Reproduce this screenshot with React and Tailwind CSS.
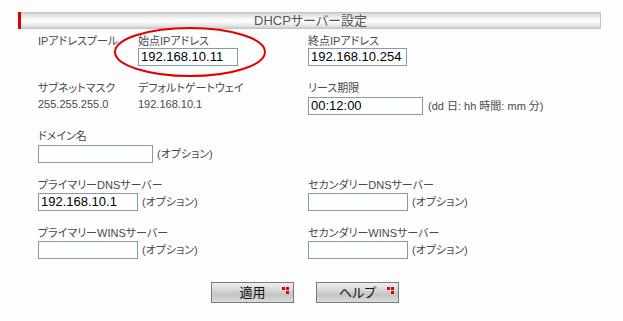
import React from "react";

const inputCls =
  "block h-[18px] border border-[#7f9db9] bg-white px-[2px] text-[13px] leading-[16px] text-black font-['Liberation_Sans',sans-serif]";

function Label({ children, className = "" }) {
  return <div className={"h-[14px] leading-[14px] whitespace-nowrap " + className}>{children}</div>;
}

function Dots() {
  return (
    <svg width="7" height="7" viewBox="0 0 7 7" className="absolute right-[4px] top-[4px]">
      <rect x="0" y="0" width="3" height="3" fill="#e00000" />
      <rect x="4" y="0" width="3" height="3" fill="#e00000" />
      <rect x="4" y="4" width="3" height="3" fill="#e00000" />
    </svg>
  );
}

function Btn({ children }) {
  return (
    <div className="relative w-[83px] h-[21px] border border-[#7a7a7a] bg-[linear-gradient(#efefef,#d9d9d9_35%,#c4c4c4_60%,#dcdcdc)] flex items-center justify-center text-[13px] text-[#111]">
      {children}
      <Dots />
    </div>
  );
}

function Opt() {
  return <span className="ml-[4px] whitespace-nowrap">(オプション)</span>;
}

export default function App() {
  return (
    <div className="relative w-[623px] h-[321px] overflow-hidden bg-[#fcfdfc] text-[11px] text-[#4a4a4a] [font-feature-settings:'palt'] font-['Liberation_Sans','Noto_Sans_CJK_JP',sans-serif]">
      {/* header */}
      <div className="pt-[12px] pl-[18px]">
        <div className="flex w-[583px] h-[17px]">
          <div className="w-[3px] bg-[#e00000]" />
          <div className="flex-1 border border-l-0 border-[#c4c4c4] bg-[linear-gradient(#d4d4d4,#f4f4f4_35%,#ffffff_55%,#e4e4e4_85%,#cfcfcf)] flex items-center justify-center text-[13px] text-[#555]">
            DHCPサーバー設定
          </div>
        </div>
      </div>

      {/* row 1 */}
      <div className="flex pl-[38px] pt-[5px]">
        <div className="w-[100px]">
          <Label>IPアドレスプール</Label>
        </div>
        <div className="w-[170px]">
          <Label>始点IPアドレス</Label>
          <div className={inputCls + " w-[100px]"}>192.168.10.11</div>
        </div>
        <div>
          <Label>終点IPアドレス</Label>
          <div className={inputCls + " w-[99px]"}>192.168.10.254</div>
        </div>
      </div>

      {/* row 2 */}
      <div className="flex pl-[38px] pt-[15px]">
        <div className="w-[100px]">
          <Label>サブネットマスク</Label>
          <Label className="mt-[2px]">255.255.255.0</Label>
        </div>
        <div className="w-[170px]">
          <Label>デフォルトゲートウェイ</Label>
          <Label className="mt-[2px]">192.168.10.1</Label>
        </div>
        <div>
          <Label>リース期限</Label>
          <div className="flex items-center mt-[2px]">
            <div className={inputCls + " w-[115px]"}>00:12:00</div>
            <span className="ml-[5px] whitespace-nowrap">(dd 日: hh 時間: mm 分)</span>
          </div>
        </div>
      </div>

      {/* domain */}
      <div className="pl-[38px] pt-[14px]">
        <Label>ドメイン名</Label>
        <div className="flex items-center mt-[2px]">
          <div className={inputCls + " w-[115px]"} />
          <Opt />
        </div>
      </div>

      {/* DNS */}
      <div className="flex pl-[38px] pt-[15px]">
        <div className="w-[270px]">
          <Label>プライマリーDNSサーバー</Label>
          <div className="flex items-center mt-[1px]">
            <div className={inputCls + " w-[100px]"}>192.168.10.1</div>
            <Opt />
          </div>
        </div>
        <div>
          <Label>セカンダリーDNSサーバー</Label>
          <div className="flex items-center mt-[1px]">
            <div className={inputCls + " w-[100px]"} />
            <Opt />
          </div>
        </div>
      </div>

      {/* WINS */}
      <div className="flex pl-[38px] pt-[15px]">
        <div className="w-[270px]">
          <Label>プライマリーWINSサーバー</Label>
          <div className="flex items-center mt-[1px]">
            <div className={inputCls + " w-[100px]"} />
            <Opt />
          </div>
        </div>
        <div>
          <Label>セカンダリーWINSサーバー</Label>
          <div className="flex items-center mt-[1px]">
            <div className={inputCls + " w-[100px]"} />
            <Opt />
          </div>
        </div>
      </div>

      {/* buttons */}
      <div className="flex pl-[211px] pt-[23px] gap-[22px]">
        <Btn>適用</Btn>
        <Btn>ヘルプ</Btn>
      </div>

      {/* red annotation ellipse */}
      <svg className="absolute left-0 top-0 pointer-events-none" width="623" height="321">
        <ellipse cx="190" cy="52" rx="75" ry="24" fill="none" stroke="#e00000" strokeWidth="2" />
      </svg>
    </div>
  );
}
